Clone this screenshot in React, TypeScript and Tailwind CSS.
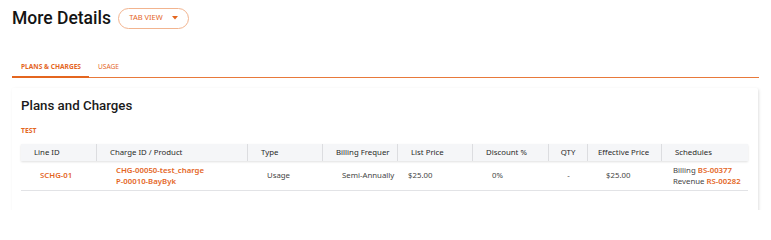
import React from "react";

const cols = [
  { label: "Line ID", w: "w-[76px]" },
  { label: "Charge ID / Product", w: "w-[151px]" },
  { label: "Type", w: "w-[75px]" },
  { label: "Billing Frequer", w: "w-[75px]" },
  { label: "List Price", w: "w-[75px]" },
  { label: "Discount %", w: "w-[76px]" },
  { label: "QTY", w: "w-[39px]" },
  { label: "Effective Price", w: "w-[74px]" },
  { label: "Schedules", w: "flex-1" },
];

function Link({ children }: { children: React.ReactNode }) {
  return <span className="font-semibold text-[#e4661f]">{children}</span>;
}

export default function App() {
  return (
    <div className="h-[210px] w-full overflow-hidden bg-white font-['Noto_Sans',sans-serif] text-[#222]">
      <div className="flex items-center gap-[7px] pl-[12px] pt-[7px]">
        <h1 className="font-['Roboto',sans-serif] text-[17.5px] font-medium leading-[22px] text-[#141414]">
          More Details
        </h1>
        <button className="flex h-[21px] w-[71px] items-center justify-center gap-[9px] rounded-full border border-[#f2b48f] text-[7.5px] text-[#e4661f]">
          <span>TAB VIEW</span>
          <svg width="6" height="4" viewBox="0 0 6 4">
            <path d="M0 0h6L3 3.5z" fill="#e4661f" />
          </svg>
        </button>
      </div>

      <div className="mx-[12px] mt-[33px] flex gap-[1px] border-b border-[#e8793a] text-[6.6px]">
        <div className="-mb-px border-b-[2px] border-[#e4661f] pb-[4px] pl-[9px] pr-[8px] font-bold text-[#e4661f]">
          PLANS &amp; CHARGES
        </div>
        <div className="pb-[4px] pl-[8px] text-[#e4661f]">USAGE</div>
      </div>

      <div className="ml-[12px] mr-[13px] mt-[10px] h-[140px] rounded-[2px] bg-white pl-[9px] pr-[10px] pt-[10px] shadow-[1px_1px_3px_rgba(0,0,0,0.12)]">
        <h2 className="font-['Roboto',sans-serif] text-[13.3px] font-medium leading-[16px] text-[#1a1a1a]">
          Plans and Charges
        </h2>
        <div className="mt-[12px] text-[6.8px] font-bold text-[#e4661f]">TEST</div>

        <div className="mt-[8px]">
          <div className="flex h-[17px] items-center bg-[#f5f6f8] text-[7.8px] text-[#2a2a2a] shadow-[0_1px_2px_rgba(0,0,0,0.12)]">
            {cols.map((c, i) => (
              <div
                key={c.label}
                className={`${c.w} flex h-full items-center border-[#dcdde0] ${i < cols.length - 1 ? "border-r" : ""} ${c.label === "QTY" ? "justify-center" : c.label === "Effective Price" ? "pl-[10px]" : "pl-[13px]"}`}
              >
                {c.label}
              </div>
            ))}
          </div>

          <div className="flex h-[30px] items-center border-b border-[#e2e3e6] text-[7.8px] leading-[11px] text-[#444]">
            <div className="w-[76px] pl-[19px] font-semibold text-[#e4661f]">SCHG-01</div>
            <div className="w-[151px] pl-[19px]">
              <div className="font-semibold text-[#e4661f]">CHG-00050-test_charge</div>
              <div className="font-semibold text-[#e4661f]">P-00010-BayByk</div>
            </div>
            <div className="w-[75px] pl-[19px]">Usage</div>
            <div className="w-[75px] pl-[19px]">Semi-Annually</div>
            <div className="w-[75px] pl-[10px]">$25.00</div>
            <div className="w-[76px] pl-[19px]">0%</div>
            <div className="w-[39px] text-center">-</div>
            <div className="w-[74px] pl-[18px]">$25.00</div>
            <div className="flex-1 pl-[11px]">
              <div>
                Billing <Link>BS-00377</Link>
              </div>
              <div>
                Revenue <Link>RS-00282</Link>
              </div>
            </div>
          </div>
        </div>
      </div>
    </div>
  );
}
